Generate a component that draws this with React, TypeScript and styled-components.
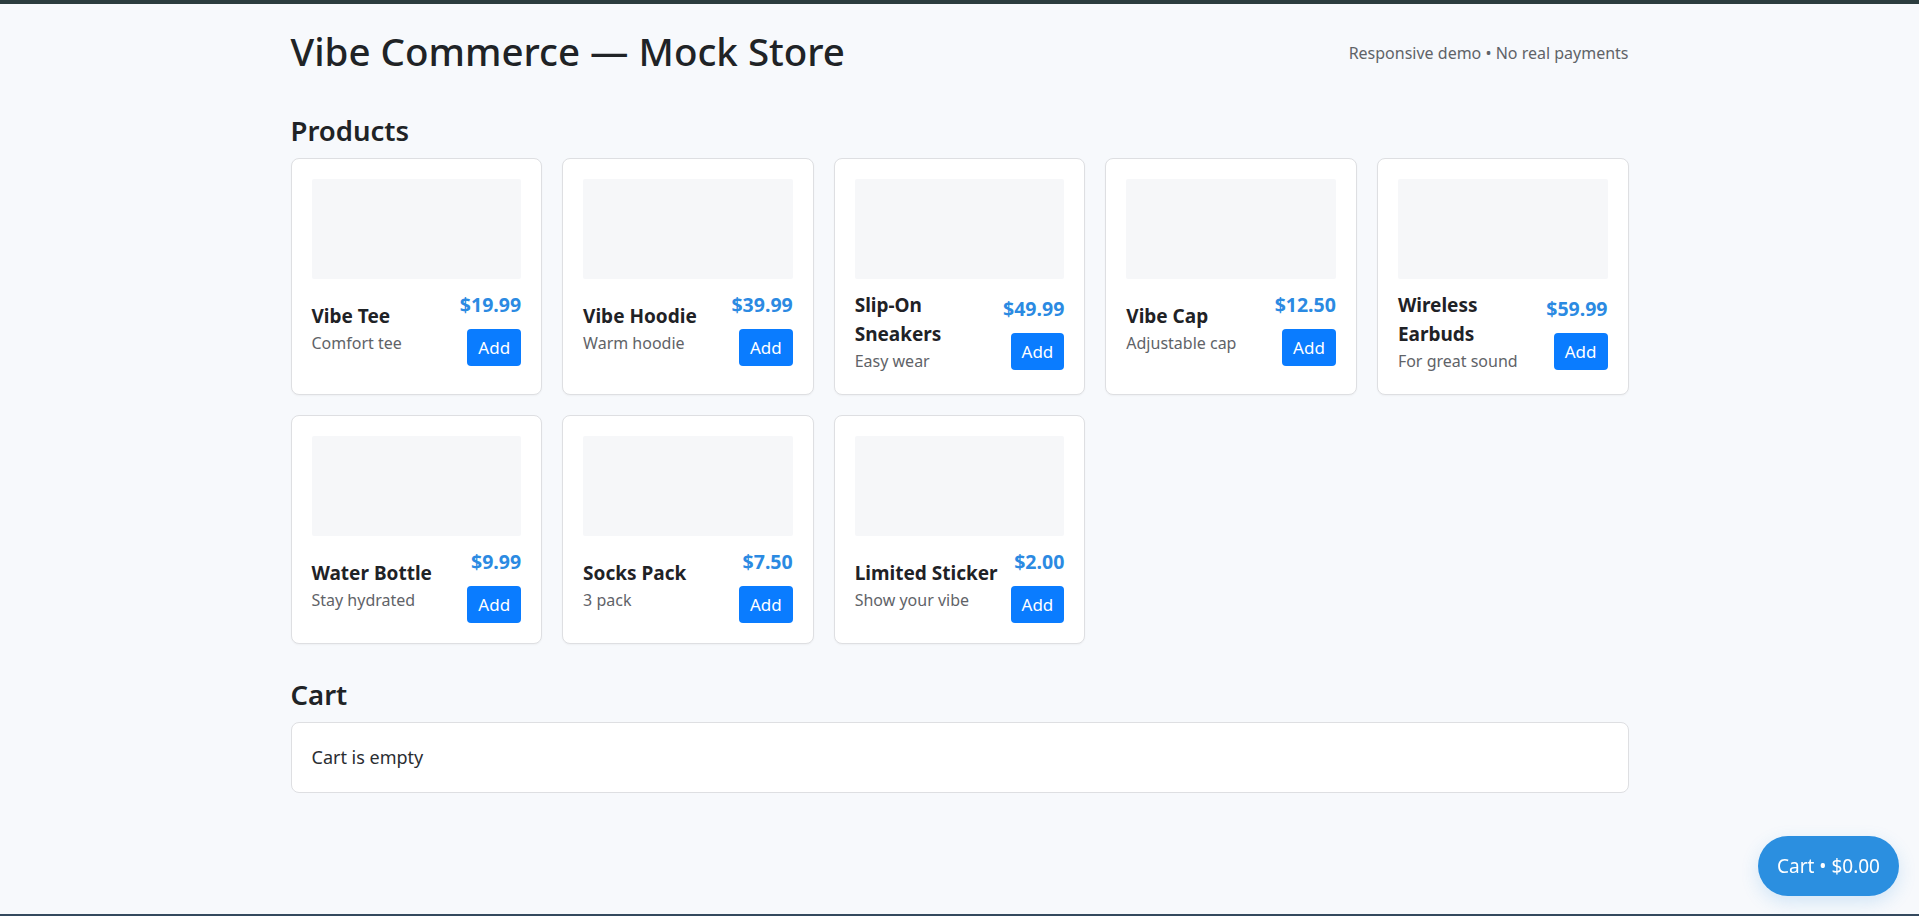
import React from "react";
import styled, { createGlobalStyle } from "styled-components";

const GlobalStyle = createGlobalStyle`
  html, body { margin: 0; padding: 0; }
  body {
    background: #f7f9fc;
    font-family: "Noto Sans", "Open Sans", Arial, sans-serif;
    color: #212529;
    border-top: 4px solid #2c3d3f;
    min-height: 912px;
    box-sizing: border-box;
  }
  * { box-sizing: border-box; }
`;

const BottomEdge = styled.div`
  position: fixed;
  left: 0;
  right: 0;
  bottom: 0;
  height: 2px;
  background: #34495e;
`;

const Container = styled.main`
  max-width: 1338px;
  margin: 0 auto;
  padding-top: 24px;
`;

const Header = styled.header`
  display: flex;
  justify-content: space-between;
  align-items: center;
`;

const Title = styled.h1`
  margin: 0;
  font-size: 38.5px;
  font-weight: 500;
  line-height: 1.2;
  letter-spacing: 0;
  color: #202326;
`;

const Tagline = styled.span`
  font-size: 16px;
  color: #5f6368;
  margin-top: 4px;
`;

const SectionTitle = styled.h2<{ $top: number }>`
  margin: ${(p) => p.$top}px 0 11px;
  font-size: 27.5px;
  font-weight: 600;
  line-height: 1.2;
  color: #202326;
`;

const Grid = styled.div`
  display: grid;
  grid-template-columns: repeat(5, 1fr);
  gap: 20px;
`;

const Card = styled.article`
  background: #fff;
  border: 1px solid #dedfe2;
  border-radius: 8px;
  padding: 20px;
  box-shadow: 0 1px 2px rgba(0, 0, 0, 0.04);
`;

const Thumb = styled.div`
  height: 100px;
  background: #f6f7f9;
  border-radius: 2px;
`;

const Info = styled.div`
  margin-top: 12px;
  display: flex;
  justify-content: space-between;
  align-items: center;
  gap: 10px;
`;

const Meta = styled.div`
  display: flex;
  flex-direction: column;
`;

const Name = styled.div`
  font-size: 19px;
  font-weight: 700;
  line-height: 29px;
  color: #1f2226;
`;

const Desc = styled.div`
  font-size: 16px;
  line-height: 25px;
  color: #5f6368;
`;

const Side = styled.div`
  display: flex;
  flex-direction: column;
  align-items: flex-end;
  gap: 10px;
  flex-shrink: 0;
`;

const Price = styled.div`
  font-size: 19.5px;
  font-weight: 700;
  line-height: 28px;
  color: #2b8ae2;
`;

const AddButton = styled.button`
  background: #0a7cff;
  color: #fff;
  border: none;
  border-radius: 4px;
  font-family: inherit;
  font-size: 17px;
  line-height: 23px;
  padding: 7px 11px;
  cursor: pointer;
`;

const CartBox = styled.div`
  background: #fff;
  border: 1px solid #dedfe2;
  border-radius: 8px;
  padding: 20px;
  font-size: 18px;
  line-height: 29px;
  color: #2a2d31;
`;

const FloatingCart = styled.button`
  position: fixed;
  right: 20px;
  bottom: 20px;
  height: 60px;
  padding: 0 19px;
  border: none;
  border-radius: 30px;
  background: #2b8fe0;
  color: #fff;
  font-family: inherit;
  font-size: 19px;
  box-shadow: 0 6px 18px rgba(43, 143, 224, 0.18);
  cursor: pointer;
`;

type Product = { name: string; desc: string; price: string };

const products: Product[] = [
  { name: "Vibe Tee", desc: "Comfort tee", price: "$19.99" },
  { name: "Vibe Hoodie", desc: "Warm hoodie", price: "$39.99" },
  { name: "Slip-On Sneakers", desc: "Easy wear", price: "$49.99" },
  { name: "Vibe Cap", desc: "Adjustable cap", price: "$12.50" },
  { name: "Wireless Earbuds", desc: "For great sound", price: "$59.99" },
  { name: "Water Bottle", desc: "Stay hydrated", price: "$9.99" },
  { name: "Socks Pack", desc: "3 pack", price: "$7.50" },
  { name: "Limited Sticker", desc: "Show your vibe", price: "$2.00" },
];

export default function App() {
  return (
    <>
      <GlobalStyle />
      <Container>
        <Header>
          <Title>Vibe Commerce — Mock Store</Title>
          <Tagline>Responsive demo • No real payments</Tagline>
        </Header>
        <SectionTitle $top={40}>Products</SectionTitle>
        <Grid>
          {products.map((p) => (
            <Card key={p.name}>
              <Thumb />
              <Info>
                <Meta>
                  <Name>{p.name}</Name>
                  <Desc>{p.desc}</Desc>
                </Meta>
                <Side>
                  <Price>{p.price}</Price>
                  <AddButton>Add</AddButton>
                </Side>
              </Info>
            </Card>
          ))}
        </Grid>
        <SectionTitle $top={34}>Cart</SectionTitle>
        <CartBox>Cart is empty</CartBox>
      </Container>
      <FloatingCart>Cart • $0.00</FloatingCart>
      <BottomEdge />
    </>
  );
}
